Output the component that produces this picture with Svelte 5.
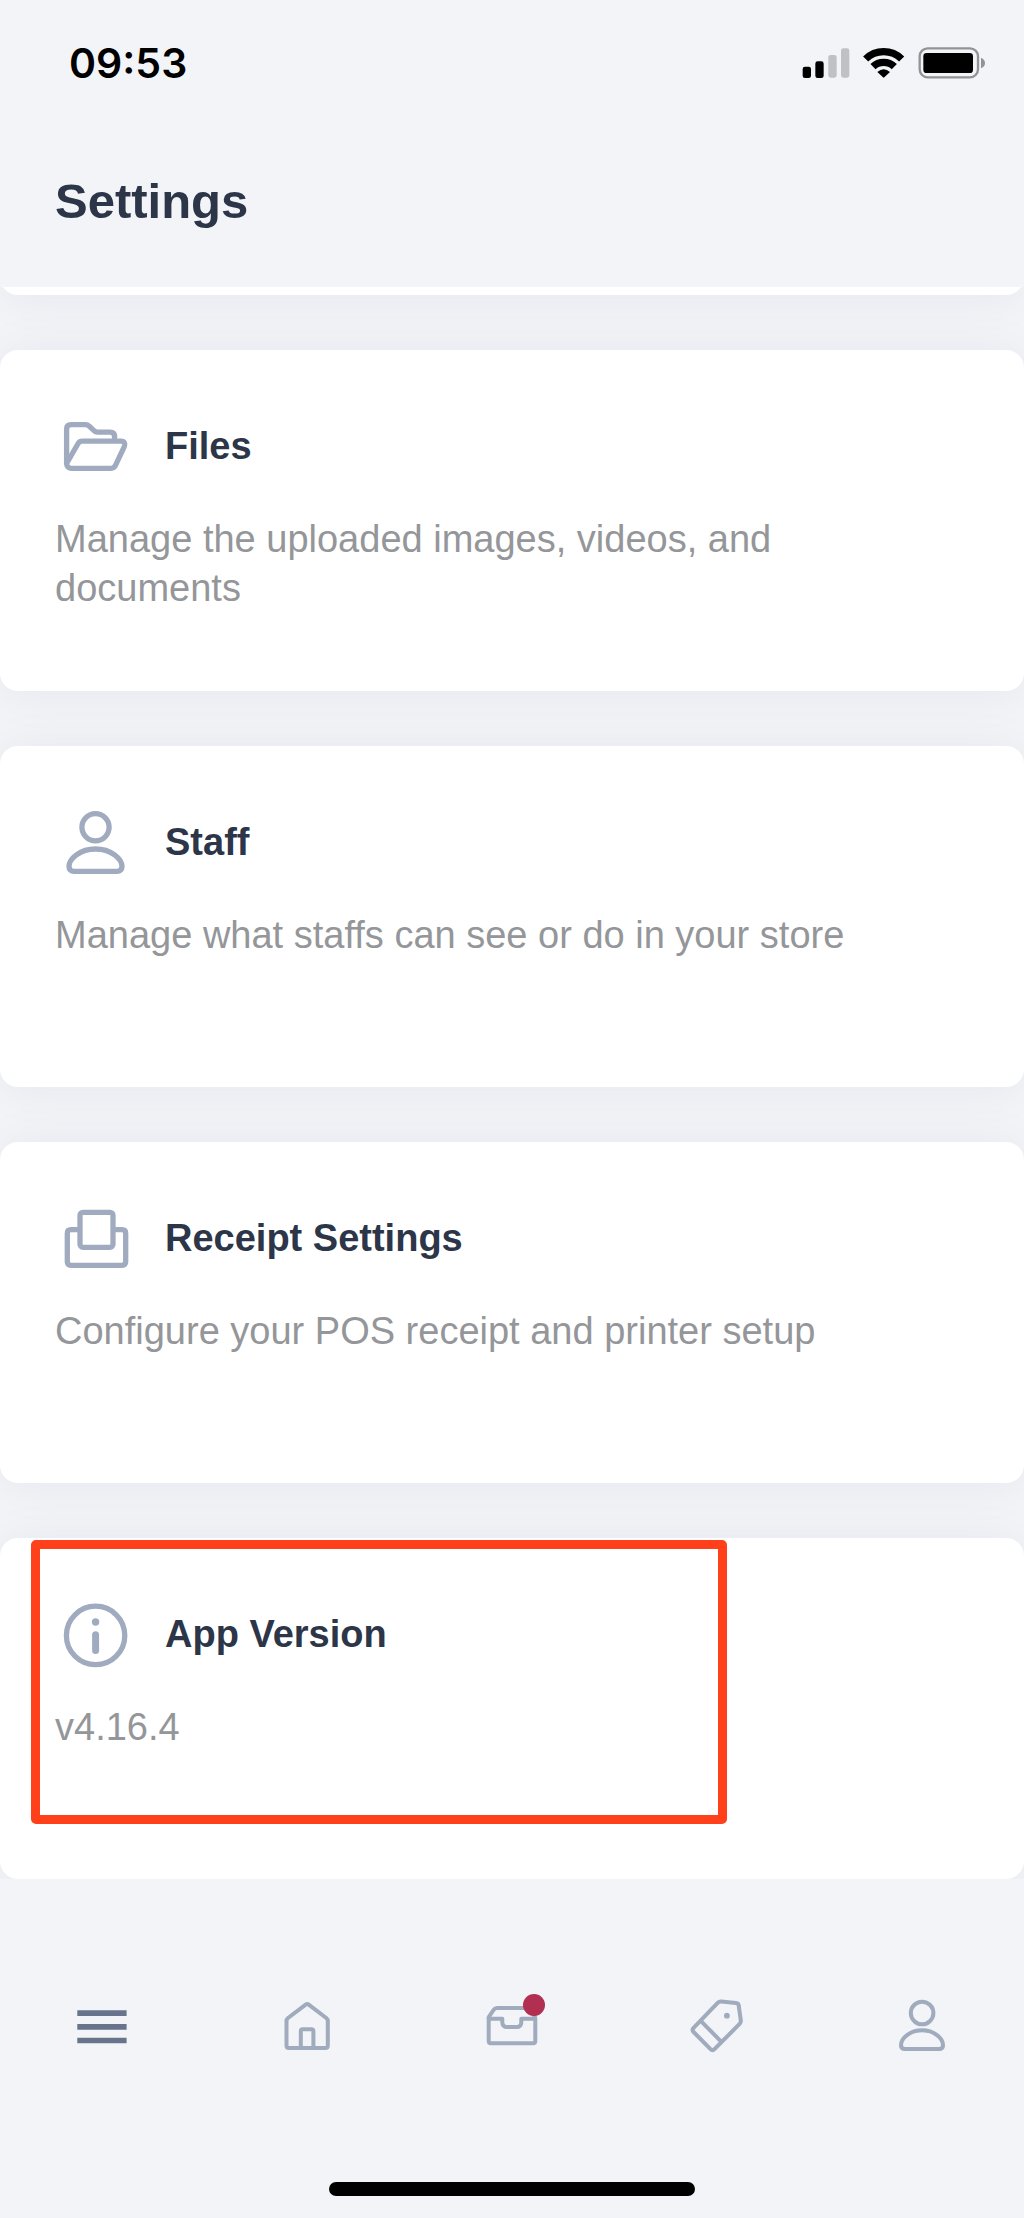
<script lang="ts">
	type IconName = 'files' | 'staff' | 'receipt' | 'info';
	type Setting = {
		icon: IconName;
		title: string;
		text: string;
		href?: string;
		highlighted?: boolean;
	};

	const settings: Setting[] = [
		{
			icon: 'files',
			title: 'Files',
			text: 'Manage the uploaded images, videos, and documents',
			href: '#files'
		},
		{
			icon: 'staff',
			title: 'Staff',
			text: 'Manage what staffs can see or do in your store',
			href: '#staff'
		},
		{
			icon: 'receipt',
			title: 'Receipt Settings',
			text: 'Configure your POS receipt and printer setup',
			href: '#receipt'
		},
		{ icon: 'info', title: 'App Version', text: 'v4.16.4', highlighted: true }
	];

	const tabs = [
		{ id: 'menu', label: 'Menu' },
		{ id: 'home', label: 'Home' },
		{ id: 'orders', label: 'Orders' },
		{ id: 'products', label: 'Products' },
		{ id: 'account', label: 'Account' }
	];
</script>

{#snippet cardIcon(name: IconName)}
	<svg class="card__icon" viewBox="1 -1 82 82" aria-hidden="true">
		{#if name === 'files'}
			<path
				d="M12.6 57.5V23.2q0-4.5 4.5-4.5H31.5q2.2 0 3.8 1.6L40 24.6q1.5 1.5 3.5 1.5H56q4.6 0 4.6 4.6V34"
			/>
			<path
				d="M28.3 35.2H67.2c3 0 4.5 2.5 3.2 5.2L61.6 59.2c-1 2.2-2.3 3.1-4.5 3.1H17c-3 0-4.4-2.3-4.4-4.8L23.8 38c1-2 2.4-2.8 4.5-2.8z"
			/>
		{:else if name === 'staff'}
			<circle cx="41.5" cy="25.2" r="13.6" />
			<path
				d="M41.5 47C26 47 15 57 15 64.5c0 3 2 4.9 5 4.9h43c3 0 5-1.9 5-4.9C68 57 57 47 41.5 47z"
			/>
		{:else if name === 'receipt'}
			<rect x="26" y="14.3" width="33" height="35" rx="3" />
			<path
				d="M26 31.7H17q-3.7 0-3.7 3.7V63.6q0 3.7 3.7 3.7H68q3.7 0 3.7-3.7V35.4q0-3.7-3.7-3.7H59"
			/>
		{:else}
			<circle cx="41.6" cy="41.4" r="29.2" />
			<circle class="dot" cx="41.6" cy="28" r="3.7" />
			<path class="stem" d="M41.6 40.8V56.5" />
		{/if}
	</svg>
{/snippet}

{#snippet cardBody(item: Setting)}
	<div class="card__head">
		{@render cardIcon(item.icon)}
		<h2>{item.title}</h2>
	</div>
	<p>{item.text}</p>
{/snippet}

<div class="screen">
	<header>
		<div class="status">
			<time>09:53</time>
			<div class="status__icons">
				<svg class="signal" viewBox="126 80 144 96" role="img" aria-label="Signal">
					<rect x="128" y="139" width="25" height="34" rx="7" />
					<rect x="166" y="123" width="25" height="50" rx="7" />
					<rect class="off" x="205" y="104" width="25" height="68" rx="7" />
					<rect class="off" x="243" y="84" width="25" height="88" rx="7" />
				</svg>
				<svg class="wifi" viewBox="306 80 132 96" role="img" aria-label="Wi-Fi">
					<path class="arc" d="M317 116A77 77 0 0 1 425 116" />
					<path class="arc" d="M339 139A46 46 0 0 1 403 139" />
					<path d="M352 155Q371 138 390 155L373 171Q371 173 369 171Z" />
				</svg>
				<svg class="battery" viewBox="474 80 204 96" role="img" aria-label="Battery">
					<rect class="shell" x="479" y="84" width="175" height="87" rx="24" />
					<rect x="490" y="98" width="149" height="60" rx="10" />
					<path class="nub" d="M663 112Q675 117 675 128T663 144Z" />
				</svg>
			</div>
		</div>
		<h1>Settings</h1>
	</header>

	<main>
		<ul class="cards">
			<!-- tail of the card that is scrolled under the header -->
			<li class="card card--tail" aria-hidden="true"></li>
			{#each settings as item (item.title)}
				<li class="card">
					{#if item.href}
						<a class="card__body" href={item.href}>{@render cardBody(item)}</a>
					{:else}
						<div class="card__body">{@render cardBody(item)}</div>
					{/if}
					{#if item.highlighted}
						<span class="highlight"></span>
					{/if}
				</li>
			{/each}
		</ul>
	</main>

	<footer>
		<nav aria-label="Primary">
			{#each tabs as tab (tab.id)}
				<a
					href={`#${tab.id}`}
					aria-label={tab.label}
					aria-current={tab.id === 'menu' ? 'page' : undefined}
				>
					<svg viewBox="0 0 66 66" aria-hidden="true">
						{#if tab.id === 'menu'}
							<path class="bars" d="M8.3 20.2H57.6M8.3 33.9H57.6M8.3 47.5H57.6" />
						{:else if tab.id === 'home'}
							<path
								d="M32 11.4q1.2-.9 2.4 0L52.3 25q1.5 1.2 1.5 2.9V52.5q0 2.5-2.5 2.5H15q-2.5 0-2.5-2.5V27.9q0-1.7 1.5-2.9z"
							/>
							<path d="M26.8 54V38.3q0-2 2-2h8.6q2 0 2 2V54" />
						{:else if tab.id === 'orders'}
							<path
								d="M9.7 25.7V48q0 2.2 2.2 2.2H54.1q2.2 0 2.2-2.2V25.7H42.3v3.5c0 3.2-1.8 4.8-5 4.8h-9c-3.2 0-5-1.6-5-4.8v-3.5H9.7q-.5-1 .5-2.4l4.6-6.6q1.2-1.7 3.3-1.7H47.5q2.2 0 3.4 1.7l4.8 6.6q.6 1 .6 2.4"
							/>
							<circle class="badge" cx="55" cy="12" r="11" />
						{:else if tab.id === 'products'}
							<path
								d="M33.9 9.7q1.4-1.4 3.3-1.2l14.8 1.4q2.5.2 2.7 2.5L56.8 27.5q.2 2-1.2 3.4L30.5 56.2q-2 2-4 0L9.6 39q-2-2 0-4.2z"
							/>
							<path d="M17.2 28.3L36.9 48.3" />
							<circle class="dot" cx="42.9" cy="22.7" r="2.9" />
						{:else}
							<circle cx="33.1" cy="20" r="11.3" />
							<path
								d="M33 37.3C21 37.3 12 45 12 52.2c0 2.5 1.7 3.8 4 3.8h34c2.3 0 4-1.3 4-3.8C54 45 45 37.3 33 37.3z"
							/>
						{/if}
					</svg>
				</a>
			{/each}
		</nav>
		<div class="home-indicator"></div>
	</footer>
</div>

<style>
	:global(body) {
		background: #f2f4f8;
	}

	.screen {
		display: flex;
		flex-direction: column;
		min-height: 100vh;
		background: #f2f4f8;
		color: #2c3648;
		font-family: 'Liberation Sans', Arial, sans-serif;
	}

	.status {
		display: flex;
		align-items: center;
		justify-content: space-between;
		height: 126px;
		padding: 0 38px 0 69px;
		color: #000;
	}

	.status time {
		font-family: Inter, sans-serif;
		font-size: 41px;
		font-weight: 600;
		line-height: 48px;
	}

	.status__icons {
		display: flex;
		gap: 12px;
	}

	.status__icons svg {
		height: 32px;
	}

	.signal {
		width: 48px;
	}

	.signal .off {
		fill: #bfc1c5;
	}

	.wifi {
		width: 44px;
	}

	.wifi .arc {
		fill: none;
		stroke: #000;
		stroke-width: 22;
	}

	.battery {
		width: 68px;
	}

	.battery .shell {
		fill: none;
		stroke: #929397;
		stroke-width: 7;
	}

	.battery .nub {
		fill: #929397;
	}

	h1 {
		margin: 0;
		padding: 47px 55px 58px;
		font-size: 49px;
		line-height: 56px;
	}

	main {
		overflow: hidden;
	}

	.cards {
		display: flex;
		flex-direction: column;
		gap: 55px;
		margin: 0;
		padding: 0;
		list-style: none;
	}

	.card {
		position: relative;
		min-height: 341px;
		border-radius: 18px;
		background: #fff;
		box-shadow: 0 2px 50px rgba(40, 40, 50, 0.06);
	}

	.card--tail {
		min-height: 60px;
		margin-top: -52px;
	}

	.card__body {
		display: block;
		padding: 55px 55px 40px;
		color: inherit;
		text-decoration: none;
	}

	.card__head {
		display: flex;
		align-items: center;
		gap: 28px;
	}

	.card__icon {
		width: 82px;
		height: 82px;
		fill: none;
		stroke: #a0abc0;
		stroke-width: 5.3;
		stroke-linejoin: round;
	}

	.card__icon .dot {
		fill: #a0abc0;
		stroke: none;
	}

	.card__icon .stem {
		stroke-width: 7;
		stroke-linecap: round;
	}

	h2 {
		margin: 0;
		font-size: 38px;
		line-height: 44px;
	}

	.card p {
		max-width: 880px;
		margin: 28px 0 0;
		color: #949699;
		font-size: 38px;
		line-height: 49px;
	}

	.highlight {
		position: absolute;
		top: 2px;
		right: 29%;
		bottom: 55px;
		left: 31px;
		border: 9px solid #ff401a;
		border-radius: 5px;
		pointer-events: none;
	}

	footer {
		display: flex;
		flex-direction: column;
		align-items: center;
		gap: 123px;
		margin-top: auto;
		padding: 112px 0 22px;
	}

	nav {
		display: grid;
		grid-template-columns: repeat(5, 1fr);
		width: 100%;
	}

	nav a {
		display: flex;
		justify-content: center;
	}

	nav svg {
		width: 66px;
		height: 66px;
		fill: none;
		stroke: #a0abbd;
		stroke-width: 4;
		stroke-linejoin: round;
	}

	nav .bars {
		stroke: #68748b;
		stroke-width: 5.7;
	}

	nav .badge {
		fill: #b12f50;
		stroke: none;
	}

	nav .dot {
		fill: #a0abbd;
		stroke: none;
	}

	.home-indicator {
		width: 366px;
		height: 14px;
		border-radius: 7px;
		background: #000;
	}
</style>
